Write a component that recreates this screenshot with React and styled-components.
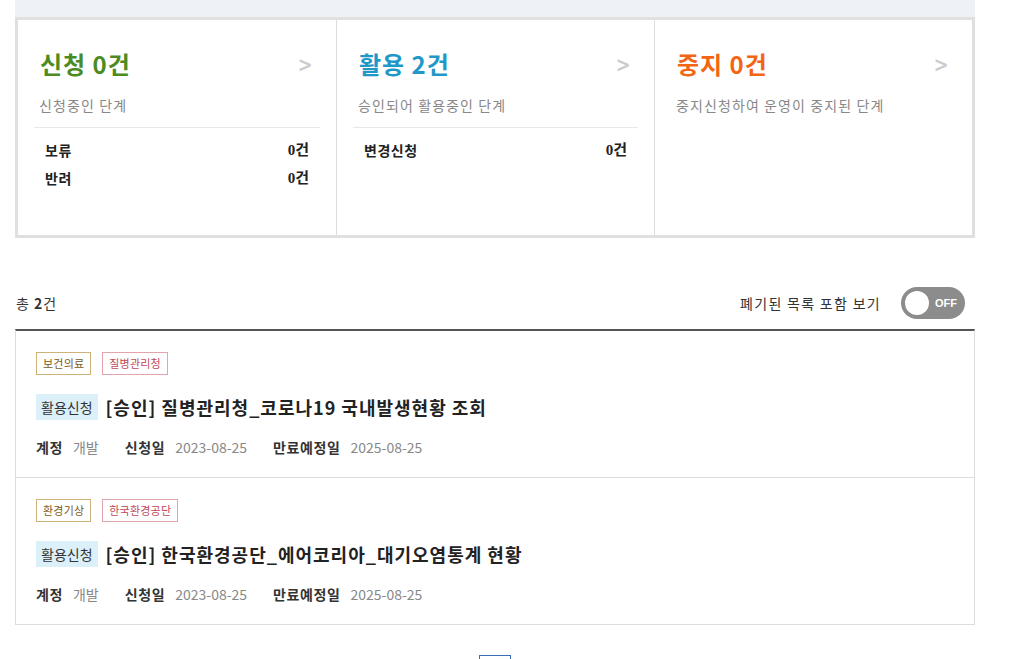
import React from "react";
import styled, { createGlobalStyle } from "styled-components";

const GlobalStyle = createGlobalStyle`
  * { box-sizing: border-box; }
  body {
    margin: 0;
    background: #fff;
    font-family: "Noto Sans CJK KR", "Noto Sans", sans-serif;
    color: #222;
  }
`;

const Page = styled.div`
  width: 960px;
  margin-left: 15px;
`;

const TopBand = styled.div`
  height: 17px;
  background: #eef2f6;
`;

const Summary = styled.div`
  display: grid;
  grid-template-columns: repeat(3, 1fr);
  border: 3px solid #e0e0e0;
  height: 221px;
`;

const StatusCol = styled.div`
  padding: 27px 16px 0;
  & + & {
    border-left: 1px solid #dddddd;
  }
`;

const StatusHead = styled.div`
  display: flex;
  justify-content: space-between;
  align-items: center;
  padding: 0 6px 0 6px;
`;

const StatusTitle = styled.h2`
  margin: 0;
  font-size: 24px;
  line-height: 34px;
  font-weight: 700;
  letter-spacing: 1px;
  color: ${(p) => p.$color};
`;

const Arrow = styled.span`
  font-size: 22px;
  font-weight: 700;
  color: #cccccc;
  font-family: "DejaVu Sans", sans-serif;
  transform: scaleX(0.8);
`;

const StatusDesc = styled.p`
  margin: 14px 0 0;
  padding: 0 0 12px 5px;
  font-size: 14px;
  line-height: 20px;
  letter-spacing: 1.1px;
  color: #888;
  border-bottom: ${(p) => (p.$divider ? "1px solid #e8e8e8" : "none")};
`;

const SubList = styled.ul`
  list-style: none;
  margin: 8px 0 0;
  padding: 0 11px;
`;

const SubRow = styled.li`
  display: flex;
  justify-content: space-between;
  font-size: 14px;
  line-height: 28px;
  font-weight: 600;
  letter-spacing: 0.5px;
  color: #222;
`;

const SubCount = styled.span`
  font-family: "Liberation Serif", "Noto Sans CJK KR", serif;
  font-weight: 700;
  font-size: 15px;
  letter-spacing: 0;
`;

const ListHeader = styled.div`
  display: flex;
  justify-content: space-between;
  align-items: center;
  margin-top: 49px;
  height: 32px;
  margin-bottom: 10px;
`;

const Total = styled.div`
  font-size: 14px;
  color: #333;
  padding-left: 1px;
  letter-spacing: 1px;
  b {
    font-weight: 700;
  }
`;

const ToggleWrap = styled.label`
  display: flex;
  align-items: center;
  gap: 20px;
  font-size: 14px;
  color: #333;
  padding-right: 10px;
  letter-spacing: 1.3px;
`;

const Toggle = styled.span`
  position: relative;
  width: 64px;
  height: 32px;
  border-radius: 16px;
  background: #8c8c8c;
  display: flex;
  align-items: center;
  justify-content: flex-end;
  padding-right: 8px;
  font-family: "Liberation Sans", sans-serif;
  font-size: 11px;
  font-weight: 700;
  color: #fff;
  letter-spacing: 0;

  &::before {
    content: "";
    position: absolute;
    left: 4px;
    top: 4px;
    width: 24px;
    height: 24px;
    border-radius: 50%;
    background: #fff;
  }
`;

const List = styled.ul`
  list-style: none;
  margin: 0;
  padding: 0;
  border-top: 2px solid #555;
  border-left: 1px solid #dddddd;
  border-right: 1px solid #dddddd;
  border-bottom: 1px solid #dddddd;
`;

const Item = styled.li`
  padding: 21px 20px 20px;
  & + & {
    border-top: 1px solid #dddddd;
  }
`;

const Tags = styled.div`
  display: flex;
  gap: 11px;
`;

const Tag = styled.span`
  display: inline-block;
  height: 23px;
  line-height: 21px;
  padding: 0 6px;
  font-size: 11px;
  letter-spacing: 0.2px;
  border: 1px solid ${(p) => (p.$kind === "org" ? "#e3a4ac" : "#cdb27a")};
  color: ${(p) => (p.$kind === "org" ? "#c0485a" : "#7a5a16")};
`;

const TitleRow = styled.div`
  display: flex;
  align-items: center;
  margin-top: 19px;
  gap: 8px;
`;

const Badge = styled.span`
  height: 26px;
  line-height: 26px;
  padding: 0 5px;
  background: #dcf0fa;
  color: #333;
  font-size: 14px;
`;

const Title = styled.h3`
  margin: 0;
  font-size: 18px;
  line-height: 26px;
  font-weight: 700;
  letter-spacing: 1px;
  color: #222;
`;

const Meta = styled.div`
  display: flex;
  margin-top: 17px;
  gap: 26px;
  font-size: 14px;
  line-height: 20px;
`;

const MetaItem = styled.span`
  display: flex;
  gap: 10px;
  b {
    font-weight: 700;
    color: #333;
    letter-spacing: 0.6px;
  }
  span {
    color: #888;
  }
`;

const Pagination = styled.div`
  display: flex;
  justify-content: center;
  margin-top: 30px;
  padding-bottom: 20px;
`;

const PageBtn = styled.button`
  width: 32px;
  height: 40px;
  border: 1px solid #3b6db3;
  background: #fff;
  color: #3b6db3;
  font-size: 13px;
  font-family: inherit;
`;

const statuses = [
  {
    title: "신청 0건",
    color: "#4b8b22",
    desc: "신청중인 단계",
    rows: [
      ["보류", "0건"],
      ["반려", "0건"],
    ],
  },
  {
    title: "활용 2건",
    color: "#1f98c8",
    desc: "승인되어 활용중인 단계",
    rows: [["변경신청", "0건"]],
  },
  {
    title: "중지 0건",
    color: "#f26513",
    desc: "중지신청하여 운영이 중지된 단계",
    rows: [],
  },
];

const items = [
  {
    category: "보건의료",
    org: "질병관리청",
    title: "[승인] 질병관리청_코로나19 국내발생현황 조회",
  },
  {
    category: "환경기상",
    org: "한국환경공단",
    title: "[승인] 한국환경공단_에어코리아_대기오염통계 현황",
  },
];

export default function App() {
  return (
    <>
      <GlobalStyle />
      <Page>
        <TopBand />
        <Summary>
          {statuses.map((s) => (
            <StatusCol key={s.title}>
              <StatusHead>
                <StatusTitle $color={s.color}>{s.title}</StatusTitle>
                <Arrow>&gt;</Arrow>
              </StatusHead>
              <StatusDesc $divider={s.rows.length > 0}>{s.desc}</StatusDesc>
              {s.rows.length > 0 && (
                <SubList>
                  {s.rows.map(([label, count]) => (
                    <SubRow key={label}>
                      <span>{label}</span>
                      <SubCount>{count}</SubCount>
                    </SubRow>
                  ))}
                </SubList>
              )}
            </StatusCol>
          ))}
        </Summary>

        <ListHeader>
          <Total>
            총 <b>2</b>건
          </Total>
          <ToggleWrap>
            폐기된 목록 포함 보기
            <Toggle>OFF</Toggle>
          </ToggleWrap>
        </ListHeader>

        <List>
          {items.map((it) => (
            <Item key={it.title}>
              <Tags>
                <Tag>{it.category}</Tag>
                <Tag $kind="org">{it.org}</Tag>
              </Tags>
              <TitleRow>
                <Badge>활용신청</Badge>
                <Title>{it.title}</Title>
              </TitleRow>
              <Meta>
                <MetaItem>
                  <b>계정</b>
                  <span>개발</span>
                </MetaItem>
                <MetaItem>
                  <b>신청일</b>
                  <span>2023-08-25</span>
                </MetaItem>
                <MetaItem>
                  <b>만료예정일</b>
                  <span>2025-08-25</span>
                </MetaItem>
              </Meta>
            </Item>
          ))}
        </List>

        <Pagination>
          <PageBtn>1</PageBtn>
        </Pagination>
      </Page>
    </>
  );
}
